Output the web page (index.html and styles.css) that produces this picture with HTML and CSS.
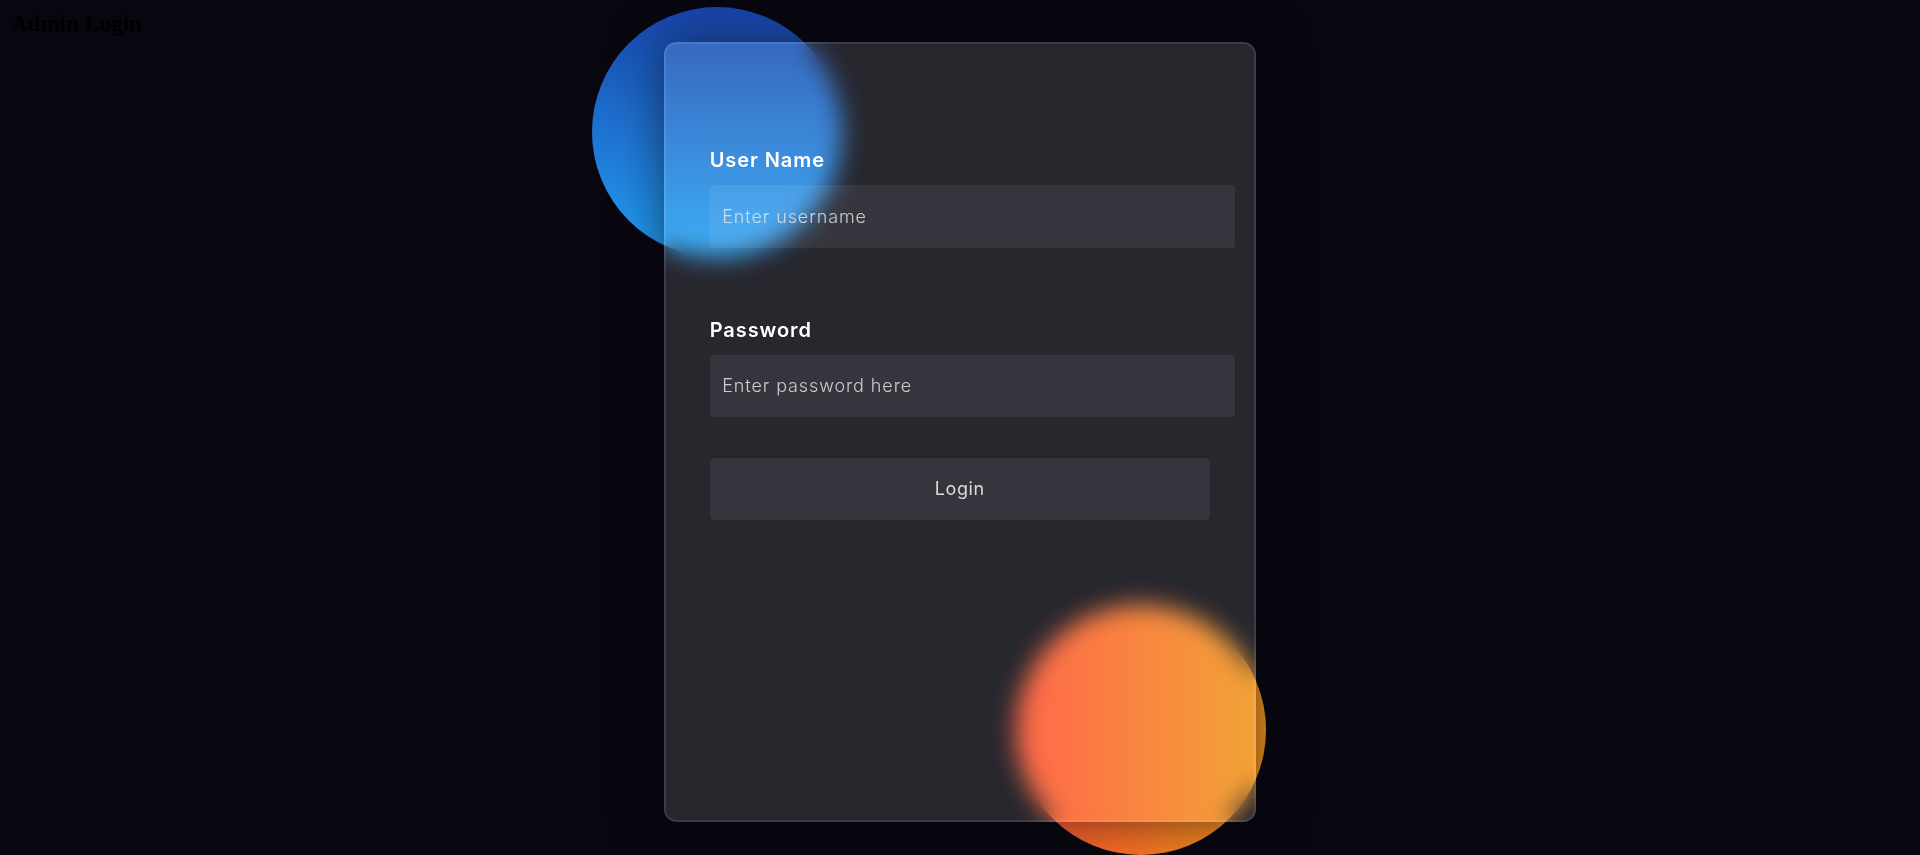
FILE: index.html
```html
<!DOCTYPE html>
<html lang="en">
<head>
<meta charset="utf-8">
<title>Admin Login</title>
<link rel="stylesheet" href="styles.css">
</head>
<body>
<h3 class="page-title">Admin Login</h3>
<div class="stage">
  <div class="shape shape-blue"></div>
  <div class="shape shape-orange"></div>
  <form class="login-card">
    <label class="field-label" for="username">User Name</label>
    <input class="field-input" type="text" id="username" placeholder="Enter username">
    <label class="field-label field-label-spaced" for="password">Password</label>
    <input class="field-input" type="password" id="password" placeholder="Enter password here">
    <button class="login-button" type="button">Login</button>
  </form>
</div>
</body>
</html>
```

FILE: styles.css
```css
html {
  background: #080710;
}

body {
  box-sizing: border-box;
  margin: 0;
  padding: 10px;
  min-height: 100vh;
  background: #080710;
  font-family: "Liberation Serif", serif;
}

.page-title {
  margin: 0;
  padding-left: 1px;
  font-family: "Liberation Serif", serif;
  font-size: 23px;
  line-height: 27px;
  font-weight: bold;
  color: #000;
}

.stage {
  position: relative;
  width: 592px;
  margin: 5px auto 0;
}

.shape {
  position: absolute;
  width: 250px;
  height: 250px;
  border-radius: 50%;
}

.shape-blue {
  left: -72px;
  top: -35px;
  background: linear-gradient(#1845ad, #23a2f6);
}

.shape-orange {
  left: 352px;
  top: 563px;
  background: linear-gradient(to right, #ff512f, #f09819);
}

.login-card {
  position: relative;
  box-sizing: border-box;
  width: 592px;
  height: 780px;
  padding: 63.5px 43.75px 61.5px;
  background-color: rgba(255, 255, 255, 0.13);
  border: 2.5px solid rgba(255, 255, 255, 0.1);
  border-radius: 12.5px;
  box-shadow: 0 0 50px rgba(8, 7, 16, 0.6);
  -webkit-backdrop-filter: blur(12.5px);
  backdrop-filter: blur(12.5px);
}

.field-label {
  display: block;
  margin-top: 37.5px;
  font-family: "Inter", "Noto Sans", sans-serif;
  font-size: 20px;
  line-height: 30px;
  font-weight: 600;
  letter-spacing: 0.9px;
  color: #fff;
}

.field-label-spaced {
  margin-top: 67px;
}

.field-input {
  display: block;
  box-sizing: border-box;
  width: 525px;
  height: 62.5px;
  margin-top: 10px;
  padding: 0 12.5px;
  border: none;
  outline: none;
  border-radius: 3.75px;
  background-color: rgba(255, 255, 255, 0.07);
  font-family: "Inter", "Noto Sans", sans-serif;
  font-size: 18px;
  font-weight: 300;
  letter-spacing: 0.9px;
  color: #fff;
}

.field-input::placeholder {
  color: #e5e5e5;
  opacity: 0.85;
}

.login-button {
  display: block;
  width: 500px;
  height: 62px;
  margin-top: 40.5px;
  padding: 0;
  border: none;
  border-radius: 5px;
  background-color: rgba(255, 255, 255, 0.07);
  font-family: "Inter", "Noto Sans", sans-serif;
  font-size: 18px;
  font-weight: 400;
  letter-spacing: 0.6px;
  color: #dcdcdc;
}
```
